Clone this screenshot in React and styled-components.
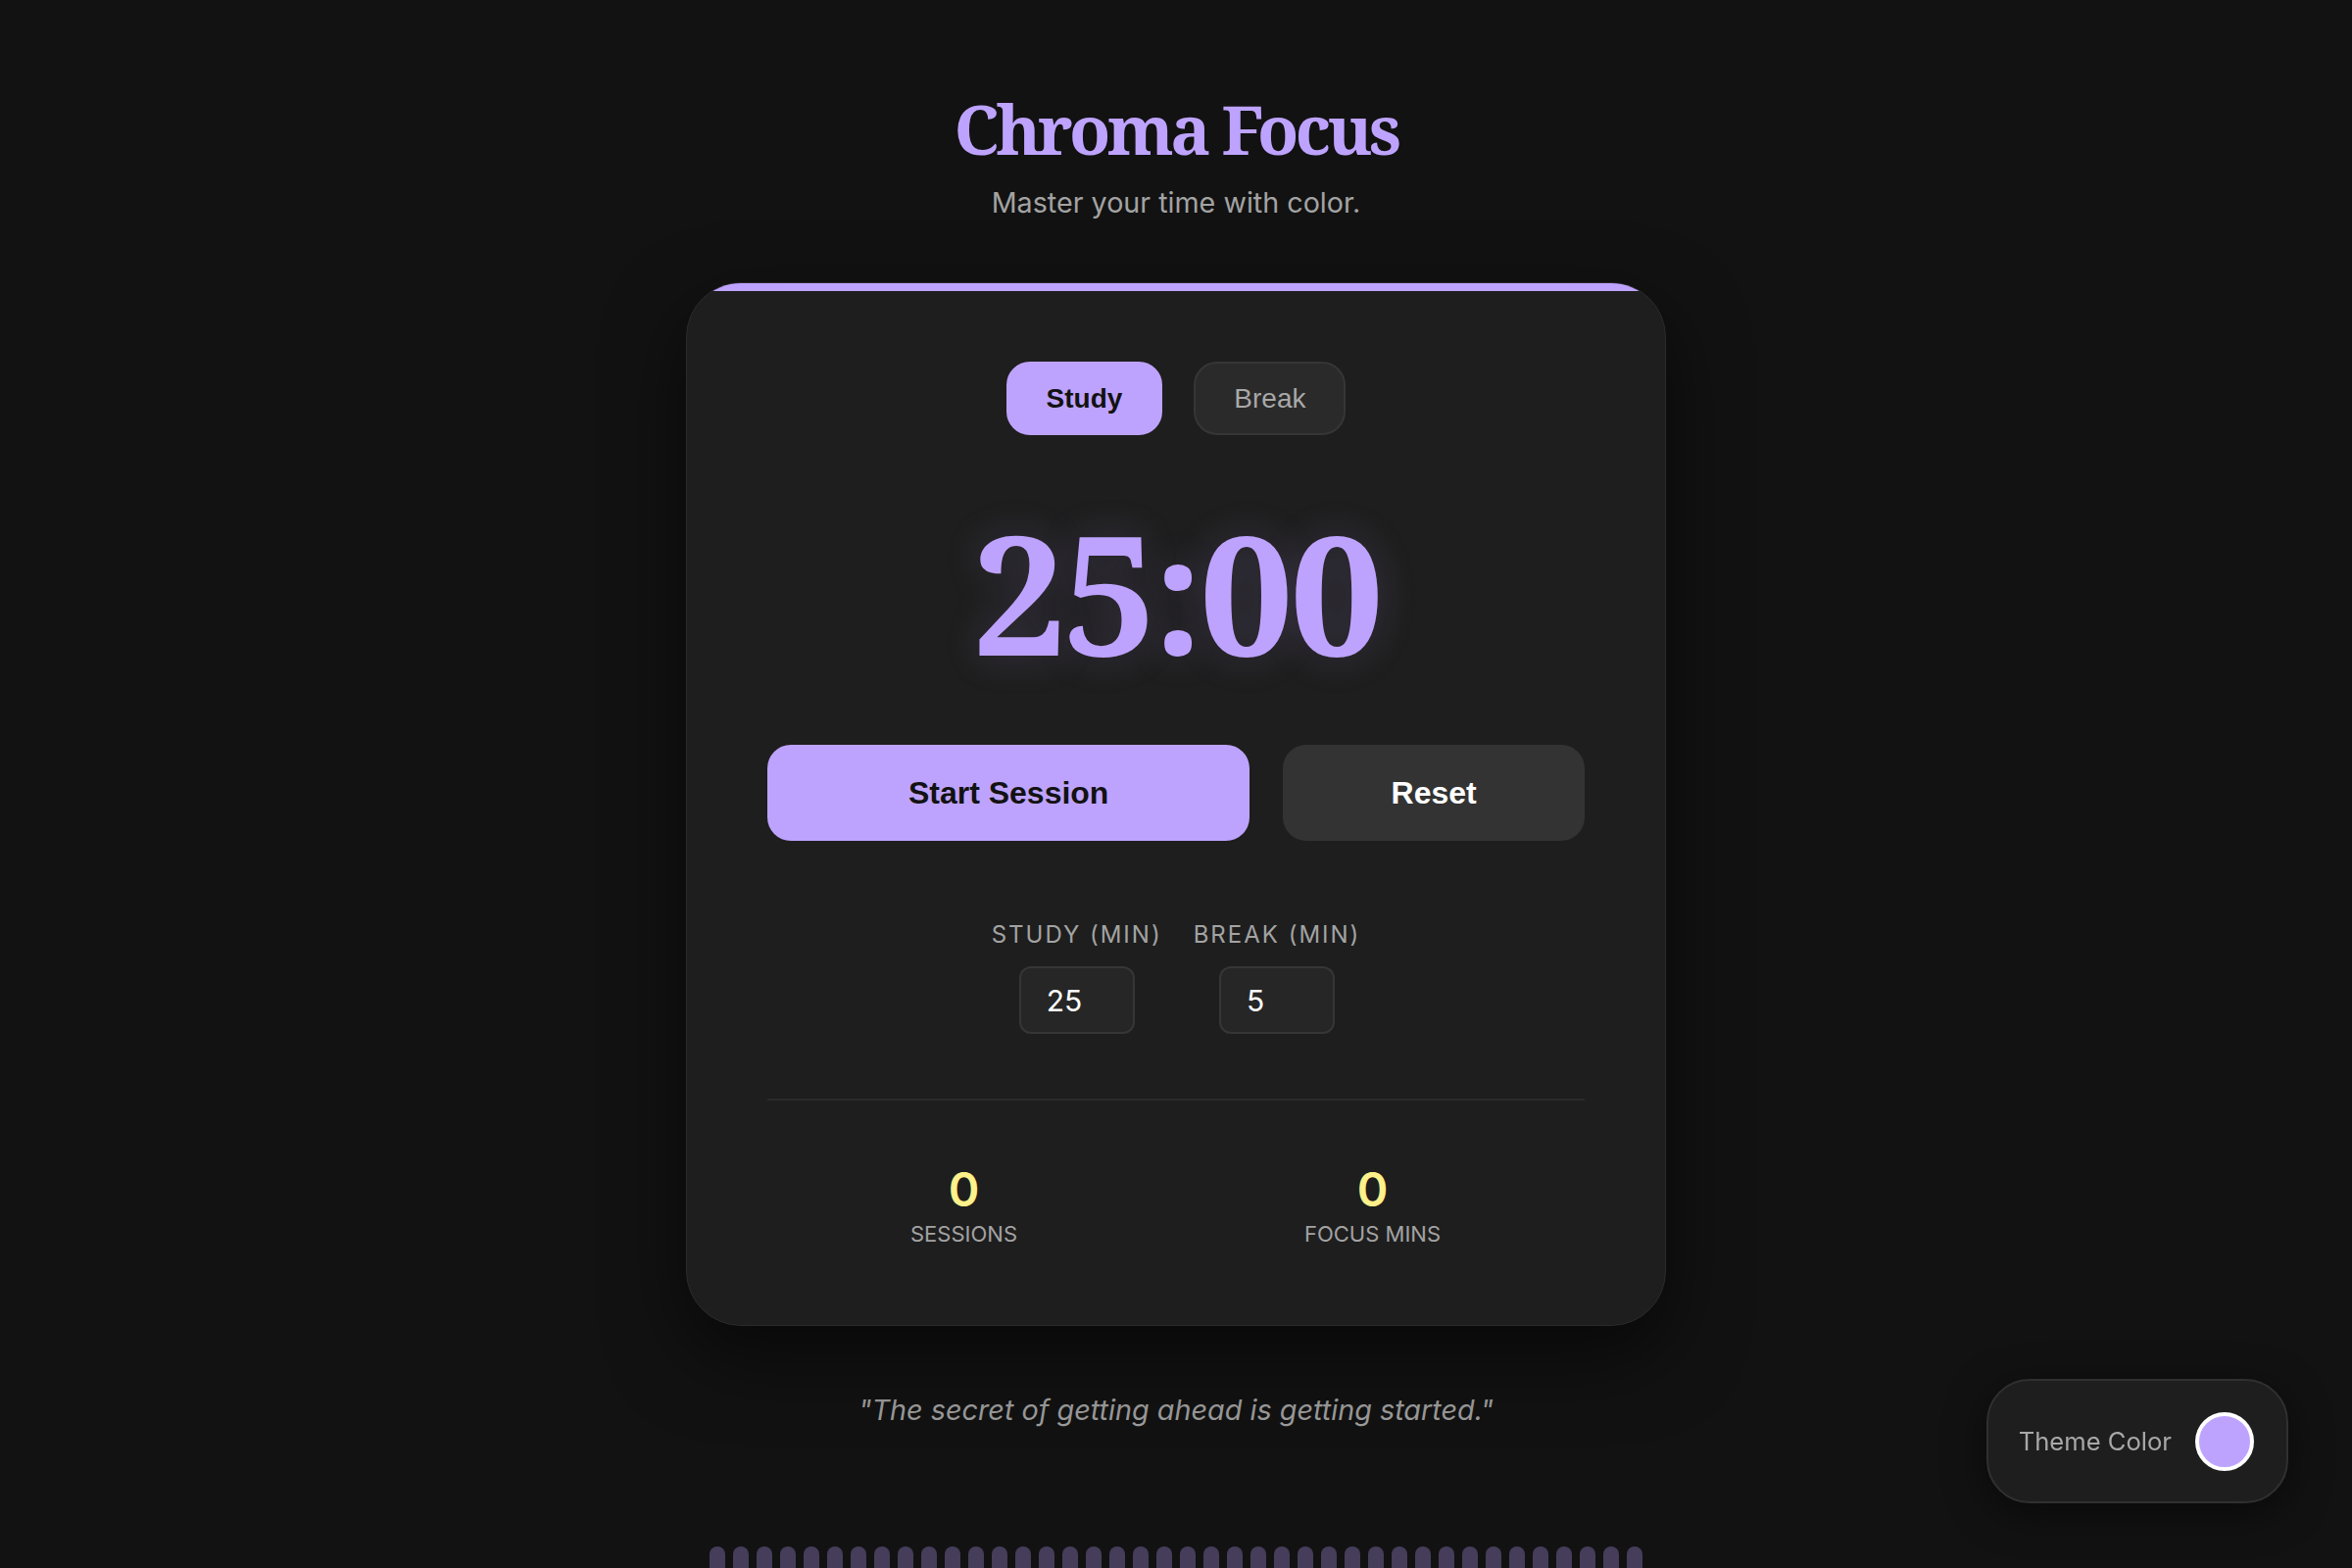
import React, { useState } from "react";
import styled, { createGlobalStyle } from "styled-components";

const ACCENT = "#bea3fe";

const GlobalStyle = createGlobalStyle`
  * { box-sizing: border-box; }
  html, body {
    margin: 0;
    padding: 0;
    background: #121212;
    overflow: hidden;
  }
  body {
    font-family: Inter, "Noto Sans", sans-serif;
    color: #eaeaea;
  }
`;

const Page = styled.main`
  min-height: 100vh;
  display: flex;
  flex-direction: column;
  align-items: center;
  padding-top: 88px;
`;

const Title = styled.h1`
  margin: 0;
  font-family: "Noto Serif", "DejaVu Serif", serif;
  font-weight: 700;
  font-size: 69px;
  line-height: 86px;
  letter-spacing: -3.6px;
  color: ${ACCENT};
`;

const Subtitle = styled.p`
  margin: 13px 0 0;
  font-size: 28.7px;
  line-height: 39px;
  color: #a3a3a3;
`;

const Card = styled.section`
  position: relative;
  overflow: hidden;
  margin-top: 62px;
  width: 1000px;
  display: flex;
  flex-direction: column;
  align-items: center;
  padding: 80px 82px 79px;
  background: #1e1e1e;
  border: 1px solid #2b2b2b;
  border-radius: 56px;
  box-shadow: 0 30px 80px rgba(0, 0, 0, 0.55);

  &::before {
    content: "";
    position: absolute;
    top: 0;
    left: 0;
    right: 0;
    height: 8px;
    background: ${ACCENT};
  }
`;

const Tabs = styled.div`
  display: flex;
  gap: 32px;
`;

const Tab = styled.button`
  height: 75px;
  padding: 0 39px;
  border-radius: 24px;
  font-family: "Liberation Sans", Arial, sans-serif;
  font-size: 28px;
  cursor: pointer;
  border: 2px solid ${(p) => (p.$active ? ACCENT : "#363636")};
  background: ${(p) => (p.$active ? ACCENT : "#2a2a2a")};
  color: ${(p) => (p.$active ? "#121212" : "#a8a8a8")};
  font-weight: ${(p) => (p.$active ? 700 : 400)};
`;

const Timer = styled.div`
  margin-top: 74px;
  font-family: "Noto Serif", "DejaVu Serif", serif;
  font-weight: 700;
  font-size: 170px;
  line-height: 1;
  letter-spacing: -4px;
  color: ${ACCENT};
  text-shadow: 0 0 40px rgba(190, 163, 254, 0.18);
`;

const Actions = styled.div`
  margin-top: 72px;
  width: 100%;
  display: grid;
  grid-template-columns: 1.6fr 1fr;
  gap: 34px;
`;

const ActionButton = styled.button`
  height: 98px;
  border: none;
  border-radius: 24px;
  font-family: "Liberation Sans", Arial, sans-serif;
  font-size: 32px;
  font-weight: 700;
  cursor: pointer;
  background: ${(p) => (p.$primary ? ACCENT : "#333333")};
  color: ${(p) => (p.$primary ? "#121212" : "#ffffff")};
`;

const Settings = styled.div`
  margin-top: 82px;
  display: flex;
  gap: 32px;
`;

const Field = styled.label`
  display: flex;
  flex-direction: column;
  align-items: center;
  gap: 18px;
`;

const FieldLabel = styled.span`
  font-size: 24px;
  line-height: 28px;
  letter-spacing: 2px;
  text-transform: uppercase;
  color: #a3a3a3;
`;

const NumberInput = styled.input`
  width: 118px;
  height: 69px;
  padding: 0 0 0 26px;
  background: #262626;
  border: 2px solid #363636;
  border-radius: 12px;
  font-family: Inter, sans-serif;
  font-size: 30px;
  color: #ffffff;
  outline: none;
  -moz-appearance: textfield;
  &::-webkit-inner-spin-button,
  &::-webkit-outer-spin-button {
    -webkit-appearance: none;
    margin: 0;
  }
`;

const Divider = styled.hr`
  margin: 66px 0 0;
  width: 100%;
  border: none;
  height: 2px;
  background: #2a2a2a;
`;

const Stats = styled.div`
  margin-top: 62px;
  margin-left: -16px;
  width: 100%;
  display: grid;
  grid-template-columns: 1fr 1fr;
`;

const Stat = styled.div`
  display: flex;
  flex-direction: column;
  align-items: center;
  gap: 2px;
`;

const StatValue = styled.span`
  font-size: 48px;
  line-height: 57.6px;
  font-weight: 600;
  color: #fef08a;
`;

const StatLabel = styled.span`
  font-size: 22px;
  line-height: 28.6px;
  text-transform: uppercase;
  color: #a3a3a3;
`;

const Quote = styled.p`
  margin: 66px 0 0;
  font-size: 28.8px;
  line-height: 39px;
  font-style: italic;
  color: #9c9c9c;
`;

const Bars = styled.div`
  margin-top: 120px;
  display: flex;
  gap: 8px;
`;

const Bar = styled.span`
  width: 16px;
  height: 60px;
  border-radius: 8px 8px 0 0;
  background: rgba(190, 163, 254, 0.3);
`;

const ThemePicker = styled.div`
  position: fixed;
  right: 65px;
  bottom: 66px;
  height: 127px;
  display: flex;
  align-items: center;
  gap: 24px;
  padding: 0 33px 0 31px;
  background: #1e1e1e;
  border: 2px solid #303030;
  border-radius: 44px;
  box-shadow: 0 10px 40px rgba(0, 0, 0, 0.5);
`;

const ThemeLabel = styled.span`
  font-size: 25.6px;
  color: #a8a8a8;
`;

const Swatch = styled.span`
  width: 60px;
  height: 60px;
  border-radius: 50%;
  border: 4px solid #ffffff;
  background: ${(p) => p.$color};
`;

export default function App() {
  const [mode, setMode] = useState("study");
  const [study, setStudy] = useState(25);
  const [brk, setBrk] = useState(5);

  return (
    <>
      <GlobalStyle />
      <Page>
        <Title>Chroma Focus</Title>
        <Subtitle>Master your time with color.</Subtitle>

        <Card>
          <Tabs>
            <Tab $active={mode === "study"} onClick={() => setMode("study")}>
              Study
            </Tab>
            <Tab $active={mode === "break"} onClick={() => setMode("break")}>
              Break
            </Tab>
          </Tabs>

          <Timer>25:00</Timer>

          <Actions>
            <ActionButton $primary>Start Session</ActionButton>
            <ActionButton>Reset</ActionButton>
          </Actions>

          <Settings>
            <Field>
              <FieldLabel>Study (min)</FieldLabel>
              <NumberInput
                type="number"
                value={study}
                onChange={(e) => setStudy(e.target.value)}
              />
            </Field>
            <Field>
              <FieldLabel>Break (min)</FieldLabel>
              <NumberInput
                type="number"
                value={brk}
                onChange={(e) => setBrk(e.target.value)}
              />
            </Field>
          </Settings>

          <Divider />

          <Stats>
            <Stat>
              <StatValue>0</StatValue>
              <StatLabel>Sessions</StatLabel>
            </Stat>
            <Stat>
              <StatValue>0</StatValue>
              <StatLabel>Focus Mins</StatLabel>
            </Stat>
          </Stats>
        </Card>

        <Quote>"The secret of getting ahead is getting started."</Quote>

        <Bars>
          {Array.from({ length: 40 }, (_, i) => (
            <Bar key={i} />
          ))}
        </Bars>
      </Page>

      <ThemePicker>
        <ThemeLabel>Theme Color</ThemeLabel>
        <Swatch $color={ACCENT} />
      </ThemePicker>
    </>
  );
}
